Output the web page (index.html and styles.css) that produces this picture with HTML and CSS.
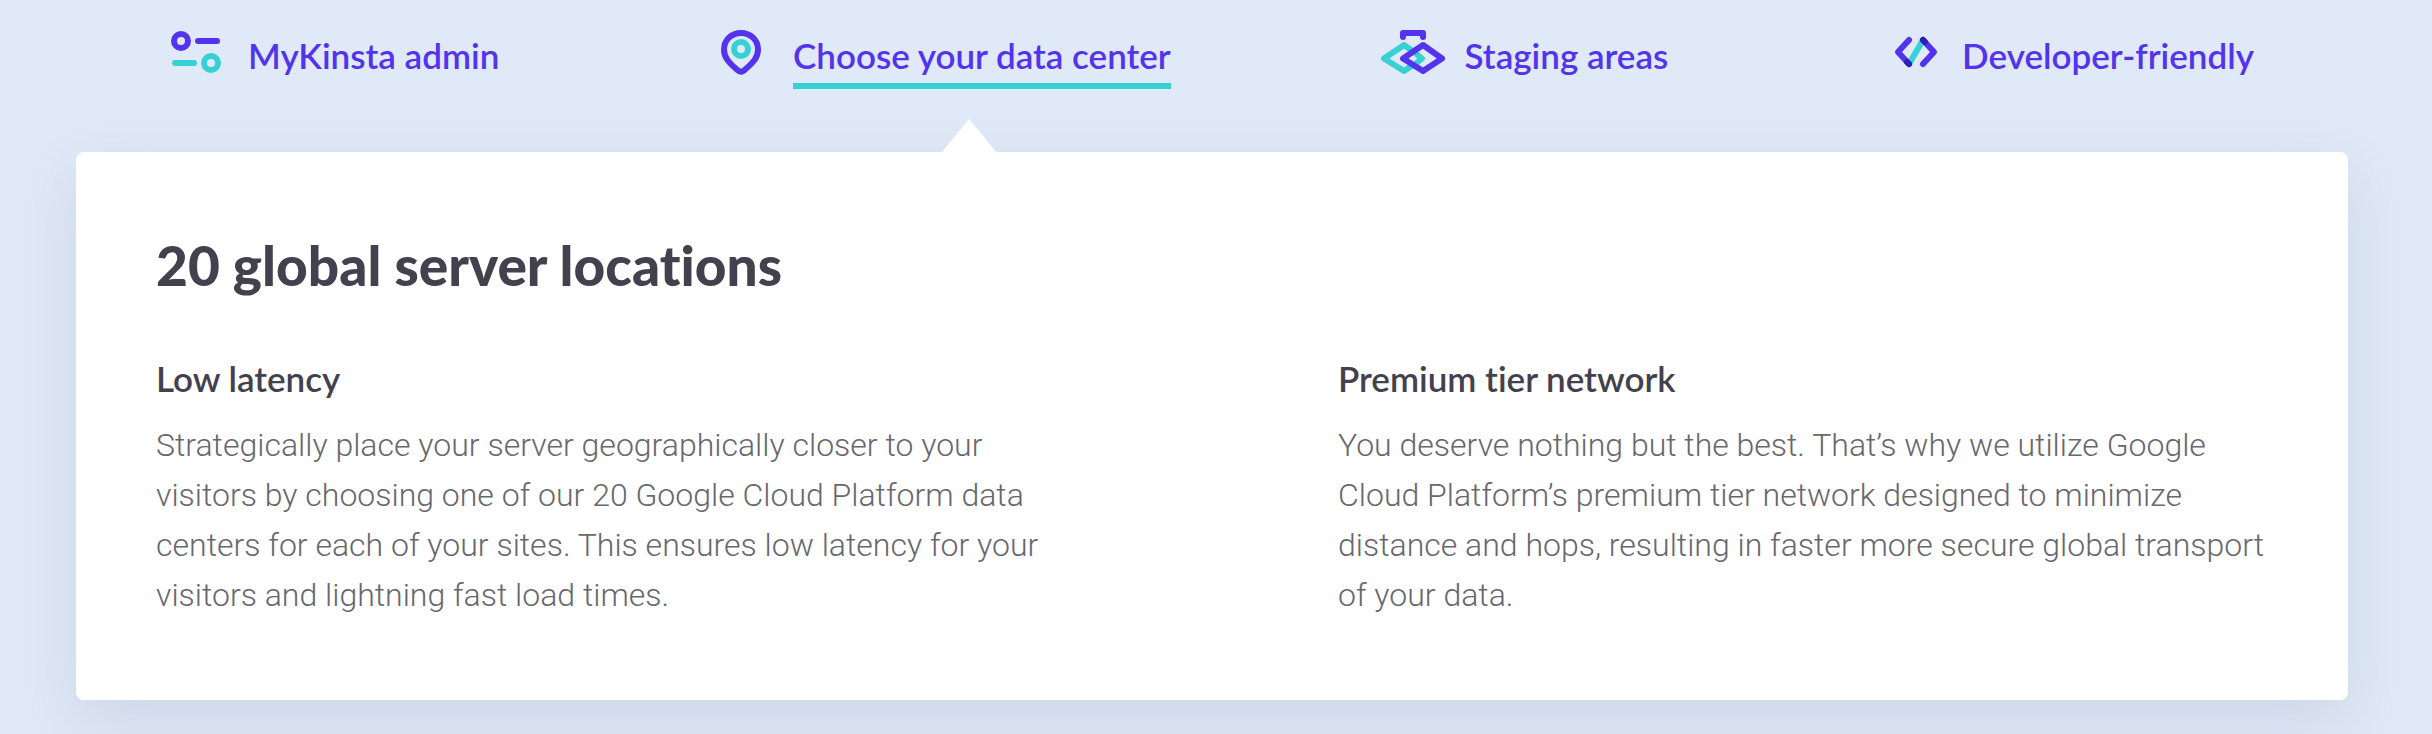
FILE: index.html
```
<!DOCTYPE html>
<html lang="en">
<head>
    <meta charset="UTF-8">
    <meta name="viewport" content="width=device-width, initial-scale=1.0">
    <title>Hosting features</title>
    <link rel="stylesheet" href="styles.css">
</head>
<body>
    <nav class="tabs">
        <a class="tab" href="#admin">
            <svg class="tab-icon" viewBox="0 0 64 48" aria-hidden="true">
                <circle class="purple" cx="17" cy="13" r="7" />
                <path class="purple" d="M34 13h19" />
                <path class="teal" d="M11 35h19" />
                <circle class="teal" cx="47" cy="35" r="7" />
            </svg>
            <span class="tab-label">MyKinsta admin</span>
        </a>
        <a class="tab active" href="#data-center">
            <svg class="tab-icon" viewBox="0 0 64 48" aria-hidden="true">
                <path class="purple" d="M32 5C22.5 5 15 12 15 21.5C15 29 19 34 29 42.5Q32 45 35 42.5C45 34 49 29 49 21.5C49 12 41.5 5 32 5Z" />
                <circle class="teal" cx="32" cy="21" r="7" />
            </svg>
            <span class="tab-label">Choose your data center</span>
        </a>
        <a class="tab" href="#staging">
            <svg class="tab-icon" viewBox="0 0 64 48" aria-hidden="true">
                <path class="teal" d="M23 17L42 30.5L23 43L3 30.5Z" />
                <path class="blank" d="M42 19L58 30.5L42 42L26 30.5Z" />
                <path class="teal" d="M36 26.5L41 30.5L36 34.5" />
                <path class="purple" d="M42 17L61 30.5L42 43L22 30.5Z" />
                <path class="purple" d="M22 9V5H42V9" />
            </svg>
            <span class="tab-label">Staging areas</span>
        </a>
        <a class="tab" href="#developers">
            <svg class="tab-icon" viewBox="0 0 64 48" aria-hidden="true">
                <path class="teal" d="M45 12L31 36" />
                <path class="purple" d="M31 12L20 24L31 36" />
                <path class="purple" d="M45 12L56 24L45 36" />
                <path class="navy" d="M29 34L31 36M45 12L47 14" />
            </svg>
            <span class="tab-label">Developer-friendly</span>
        </a>
    </nav>
    <section class="card" id="data-center">
        <h2>20 global server locations</h2>
        <div class="columns">
            <div>
                <h3>Low latency</h3>
                <p>Strategically place your server geographically closer to your visitors by choosing one of our 20 Google Cloud Platform data centers for each of your sites. This ensures low latency for your visitors and lightning fast load times.</p>
            </div>
            <div>
                <h3>Premium tier network</h3>
                <p>You deserve nothing but the best. That’s why we utilize Google Cloud Platform’s premium tier network designed to minimize distance and hops, resulting in faster more secure global transport of your data.</p>
            </div>
        </div>
    </section>
</body>
</html>
```
FILE: styles.css
```
body {
    margin: 0;
    padding: 28px 84px 34px 76px;
    background-color: #dfe9f7;
    color: #43414e;
    font-family: Lato, sans-serif;
    font-variant-ligatures: none;
}

.tabs {
    display: flex;
    justify-content: space-between;
    padding: 0 94px 63px 88px;
}

.tab {
    position: relative;
    display: flex;
    align-items: flex-start;
    gap: 20px;
    color: #5333ed;
    font-size: 35px;
    font-weight: 600;
    line-height: 55px;
    text-decoration: none;
    white-space: nowrap;
}

.tab-icon {
    width: 64px;
    height: 48px;
    fill: none;
    stroke-width: 6;
    stroke-linecap: round;
    stroke-linejoin: round;
}

.tab-label {
    border-bottom: 6px solid transparent;
}

.active .tab-label {
    border-color: #37d1d5;
}

/* pointer that joins the active tab to the card */
.active::after {
    content: '';
    position: absolute;
    top: 91px;
    left: 232px;
    width: 56px;
    height: 34px;
    background-color: #fff;
    clip-path: polygon(50% 0, 100% 100%, 0 100%);
}

.purple {
    stroke: #5333ed;
}

.teal {
    stroke: #37d1d5;
}

.navy {
    stroke: #2d1fb8;
}

.blank {
    fill: #dfe9f7;
}

.card {
    padding: 80px;
    border-radius: 8px;
    background-color: #fff;
    box-shadow: 0 20px 60px rgba(70, 80, 120, 0.12);
}

h2 {
    margin: 0 0 54px;
    font-size: 55px;
    font-weight: 900;
    line-height: 66px;
}

.columns {
    display: grid;
    grid-template-columns: 1fr 1fr;
    gap: 252px;
}

h3 {
    margin: 0 0 15px;
    font-size: 35px;
    font-weight: 600;
    line-height: 53px;
}

p {
    margin: 0;
    color: #67676e;
    font-family: Roboto, sans-serif;
    font-size: 32px;
    font-weight: 300;
    line-height: 50px;
}
```
